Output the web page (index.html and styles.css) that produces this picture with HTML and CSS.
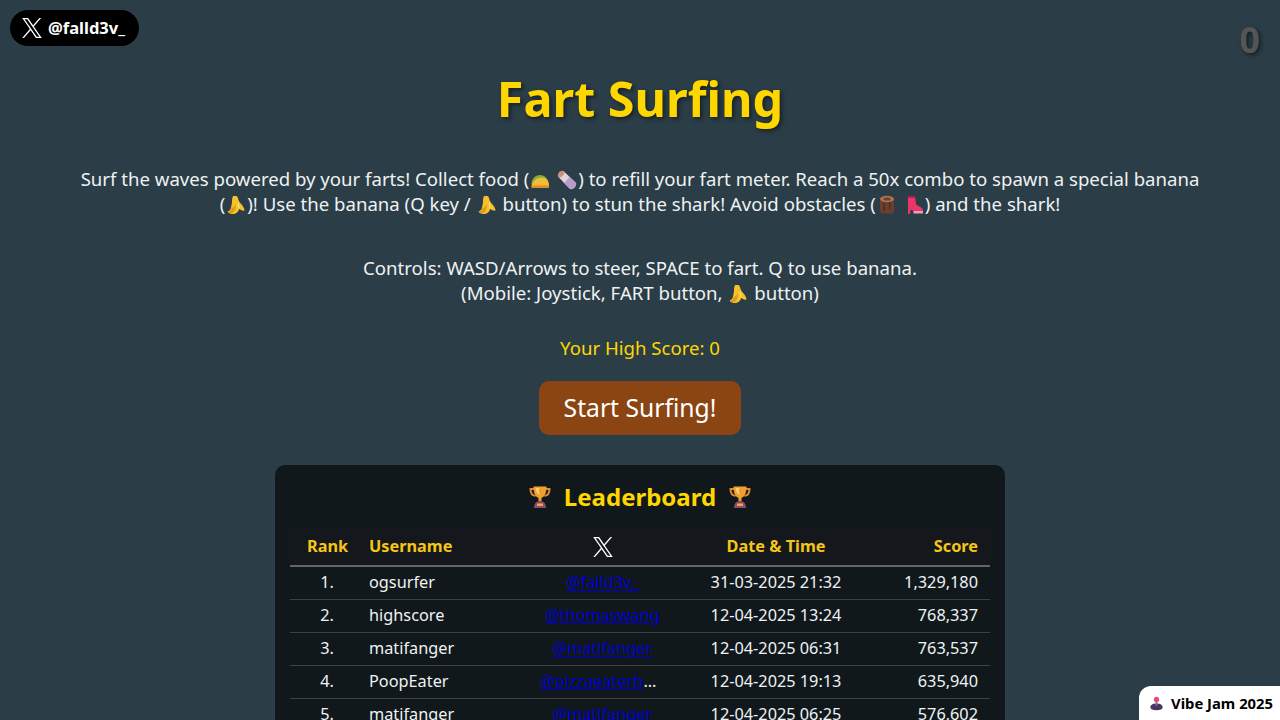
FILE: index.html
```html
<!DOCTYPE html>
<html lang="en">

<head>
  <meta charset="UTF-8">
  <title>Fart Surfing</title>
  <link rel="stylesheet" href="styles.css">
</head>

<body>
  <svg class="defs" width="0" height="0">
    <symbol id="x-logo" viewBox="0 0 1200 1227">
      <path fill="currentColor" d="M714.163 519.284L1160.89 0H1055.03L667.137 450.887L357.328 0H0L468.492 681.821L0 1226.37H105.866L515.491 750.218L842.672 1226.37H1200L714.137 519.284H714.163ZM569.165 687.828L521.697 619.934L144.011 79.6944H306.615L611.412 515.685L658.88 583.579L1055.08 1150.3H892.476L569.165 687.854V687.828Z"/>
    </symbol>
    <symbol id="taco" viewBox="0 0 20 20">
      <path fill="#7fae3a" d="M1.500 14c0-5 3.500-9 8.500-9s8.500 4 8.500 9z"/>
      <path fill="#f4bb34" d="M3 18c-1.500 0-2-1-1.500-2.500C3 10.500 7 7.500 11.500 7.500s7.500 3.500 7.500 7.500c0 1.500-1 3-2.500 3z"/>
      <path fill="#d9902a" d="M1.500 15.500h17.500V18H3z"/>
    </symbol>
    <symbol id="burrito" viewBox="0 0 20 20">
      <path fill="#e0d6dc" d="M6.500 1 19 13c1 3-3 7-6 6L1 6.500z"/>
      <path fill="#cf8f84" d="M1 6.500C0 3.500 3.500 0 6.500 1c1.500.5 1.500 2.500-.5 4.500S2.500 8 1 6.500z"/>
      <path fill="#b79ccc" d="m12.500 7 6.500 6c1 3-3 7-6 6L7 13z"/>
    </symbol>
    <symbol id="banana" viewBox="0 0 20 20">
      <path fill="#f7c12c" d="M10 1c1.500 0 2 2 2.500 4 .5 2 2 3 3.500 5 1.500 2 2.500 4 2.500 5.500-2 .5-4-.5-5.500-1.500 0 2-2 4.500-5 5-2.500.3-5-.5-6.500-2.500 2-.5 3-2 3.500-4 .5-2.500 1-4 1-6.500 0-2 .5-4 1-5z"/>
      <path fill="#e09a20" d="M9.500 9c1 4-1 8.500-4.500 9.500l-3-1.500c2-.5 3-2 3.500-4 1.500 0 3-1.500 4-4z"/>
      <path fill="#fbe08a" d="M12 7c1 2 2 5 1 7-1-1.500-1.500-4-1-7z"/>
    </symbol>
    <symbol id="log" viewBox="0 0 20 20">
      <path fill="#6b3f2e" d="M3 4h14v13c-1 2-3 1-4 2-1-1-4 0-5-1-1 1-4 0-5-1z"/>
      <ellipse fill="#a9744f" cx="10" cy="4" rx="7" ry="3.200"/>
      <ellipse fill="#6b3f2e" cx="10" cy="4" rx="3.500" ry="1.500"/>
      <path fill="#4f2c20" d="M6.500 8H8v8H6.500zm5.500-1h1.500v7H12z"/>
    </symbol>
    <symbol id="boot" viewBox="0 0 20 20">
      <path fill="#e8366a" d="M4 1h7l1 8c1 2 6 3 7 5.500V17H9.500c-.5-2-2-2.500-3-1.500L6 19H4z"/>
      <path fill="#f49ab4" d="M9.500 16H19v2.500H9.500z"/>
      <path fill="#b71f49" d="M4 1h7v2H4z"/>
    </symbol>
    <symbol id="trophy" viewBox="0 0 24 24">
      <path fill="none" stroke="#e08a2a" stroke-width="2" d="M6 4H2.500c0 4 2 6.500 5 7M18 4h3.500c0 4-2 6.500-5 7"/>
      <path fill="#f0a030" d="M5.500 1.500h13c0 6-1.500 10-5 11.500v3h-3v-3C7 11.500 5.500 7.500 5.500 1.500z"/>
      <path fill="#fbd070" d="M8 3h3c0 3 0 5 .5 7C9 9 8 6.500 8 3z"/>
      <path fill="#8a4c6a" d="M6 23c0-4 2-7 6-7s6 3 6 7z"/>
      <rect fill="#f2a24a" x="9" y="18.500" width="6" height="2.500"/>
    </symbol>
    <symbol id="joystick" viewBox="0 0 20 20">
      <path fill="#4a3560" d="M2 14c0-2 3-4 8-4s8 2 8 4v2c0 1.500-3 3-8 3s-8-1.500-8-3z"/>
      <rect fill="#8a6a9a" x="8.800" y="6" width="2.400" height="7"/>
      <circle fill="#e8487a" cx="10" cy="4.500" r="3.500"/>
    </symbol>
  </svg>

  <a class="x-badge" href="#">
    <svg class="x-badge-icon"><use href="#x-logo"/></svg>
    <span>@falld3v_</span>
  </a>

  <div class="score-display">0</div>

  <div class="menu">
    <h1 class="title">Fart Surfing</h1>

    <p class="intro">Surf the waves powered by your farts! Collect food (<svg class="emoji"><use href="#taco"/></svg> <svg class="emoji"><use href="#burrito"/></svg>) to refill your fart meter. Reach a 50x combo to spawn a special banana <span class="nowrap">(<svg class="emoji"><use href="#banana"/></svg>)!</span> Use the banana (Q key / <svg class="emoji"><use href="#banana"/></svg> button) to stun the shark! Avoid obstacles (<svg class="emoji"><use href="#log"/></svg> <svg class="emoji"><use href="#boot"/></svg>) and the shark!</p>

    <p class="controls">Controls: WASD/Arrows to steer, SPACE to fart. Q to use banana.<br>(Mobile: Joystick, FART button, <svg class="emoji"><use href="#banana"/></svg> button)</p>

    <p class="high-score">Your High Score: 0</p>

    <button class="start-button">Start Surfing!</button>

    <div class="leaderboard">
      <h2 class="leaderboard-title"><svg class="trophy"><use href="#trophy"/></svg> Leaderboard <svg class="trophy"><use href="#trophy"/></svg></h2>
      <table class="leaderboard-table">
        <thead>
          <tr>
            <th class="col-rank">Rank</th>
            <th class="col-user">Username</th>
            <th class="col-x"><svg class="th-x"><use href="#x-logo"/></svg></th>
            <th class="col-date">Date &amp; Time</th>
            <th class="col-score">Score</th>
          </tr>
        </thead>
        <tbody>
          <tr>
            <td class="col-rank">1.</td>
            <td class="col-user">ogsurfer</td>
            <td class="col-x"><a href="#">@falld3v_</a></td>
            <td class="col-date">31-03-2025 21:32</td>
            <td class="col-score">1,329,180</td>
          </tr>
          <tr>
            <td class="col-rank">2.</td>
            <td class="col-user">highscore</td>
            <td class="col-x"><a href="#">@thomaswang</a></td>
            <td class="col-date">12-04-2025 13:24</td>
            <td class="col-score">768,337</td>
          </tr>
          <tr>
            <td class="col-rank">3.</td>
            <td class="col-user">matifanger</td>
            <td class="col-x"><a href="#">@matifanger</a></td>
            <td class="col-date">12-04-2025 06:31</td>
            <td class="col-score">763,537</td>
          </tr>
          <tr>
            <td class="col-rank">4.</td>
            <td class="col-user">PoopEater</td>
            <td class="col-x"><a href="#">@pizzaeaterbot123</a></td>
            <td class="col-date">12-04-2025 19:13</td>
            <td class="col-score">635,940</td>
          </tr>
          <tr>
            <td class="col-rank">5.</td>
            <td class="col-user">matifanger</td>
            <td class="col-x"><a href="#">@matifanger</a></td>
            <td class="col-date">12-04-2025 06:25</td>
            <td class="col-score">576,602</td>
          </tr>
        </tbody>
      </table>
    </div>
  </div>

  <a class="vibe-jam" href="#"><svg class="vibe-icon"><use href="#joystick"/></svg>Vibe Jam 2025</a>
</body>

</html>
```

FILE: styles.css
```css
html, body {
  height: 100%;
  overflow: hidden;
}

body {
  margin: 0;
  background-color: #2b3d47;
  color: #eef2f3;
  font-family: "Noto Sans", "Open Sans", sans-serif;
}

.defs {
  position: absolute;
}

.nowrap {
  white-space: nowrap;
}

.emoji {
  display: inline-block;
  width: 20px;
  height: 20px;
  margin: 0 1px;
  vertical-align: -4px;
}

/* fixed corners */
.x-badge {
  position: fixed;
  top: 10px;
  left: 10px;
  display: flex;
  align-items: center;
  gap: 6px;
  height: 36px;
  width: 129px;
  box-sizing: border-box;
  padding: 0 0 2px 12px;
  background-color: #000;
  color: #fff;
  border-radius: 18px;
  font-size: 16.500px;
  font-weight: 700;
  text-decoration: none;
}

.x-badge-icon {
  width: 20px;
  height: 20px;
  margin-top: 2px;
}

.score-display {
  position: fixed;
  top: 16px;
  right: 20px;
  color: #555;
  font-size: 36px;
  font-weight: 700;
  line-height: 48px;
  text-shadow: 2px 2px 4px rgba(0, 0, 0, 0.5);
}

.vibe-jam {
  position: fixed;
  right: 0;
  bottom: 0;
  display: flex;
  align-items: center;
  gap: 7px;
  height: 34px;
  padding: 0 7px 0 10px;
  background-color: #fff;
  color: #000;
  border-top-left-radius: 12px;
  font-size: 14.800px;
  font-weight: 700;
  text-decoration: none;
}

.vibe-icon {
  width: 15px;
  height: 15px;
}

/* start menu */
.menu {
  display: flex;
  flex-direction: column;
  align-items: center;
  width: 1140px;
  margin: 0 auto;
  text-align: center;
}

.title {
  margin: 65px 0 0;
  color: #ffd700;
  font-size: 48.500px;
  font-weight: 700;
  line-height: 66px;
  text-shadow: 2px 2px 4px rgba(0, 0, 0, 0.5);
}

.intro,
.controls {
  margin: 0;
  font-size: 18.600px;
  line-height: 25px;
}

.intro {
  margin-top: 35px;
}

.controls {
  margin-top: 39px;
}

.high-score {
  margin: 30px 0 0;
  color: #ffd700;
  font-size: 18.600px;
  line-height: 25px;
}

.start-button {
  width: 202px;
  height: 54px;
  margin-top: 21px;
  padding: 0 0 2px;
  background-color: #8b4513;
  color: #fff;
  border: none;
  border-radius: 10px;
  font-family: inherit;
  font-size: 24.700px;
}

.leaderboard {
  width: 700px;
  margin-top: 30px;
  padding: 15px;
  background-color: rgba(0, 0, 0, 0.6);
  border-radius: 10px;
}

.leaderboard-title {
  display: flex;
  align-items: center;
  justify-content: center;
  gap: 12px;
  margin: 0 0 13px;
  color: #ffd700;
  font-size: 24px;
  font-weight: 700;
  line-height: 34px;
}

.trophy {
  width: 24px;
  height: 24px;
}

.leaderboard-table {
  width: 700px;
  table-layout: fixed;
  border-collapse: collapse;
  font-size: 16.300px;
}

.leaderboard-table th {
  height: 38px;
  padding: 0 12px;
  background-color: #14171b;
  color: #f5c518;
  border-bottom: 2px solid #666;
  font-weight: 700;
  font-size: 16.300px;
}

.leaderboard-table td {
  height: 30px;
  padding: 0 12px 2px;
  border-bottom: 1px solid #3a4248;
  line-height: 28px;
  white-space: nowrap;
  overflow: hidden;
  text-overflow: ellipsis;
}

.leaderboard-table a {
  color: #0000d0;
  text-decoration-thickness: 1px;
  text-underline-offset: 2px;
}

.col-rank { width: 40px; text-align: center; }
.leaderboard-table .col-rank { padding-left: 17px; padding-right: 10px; }
.col-user { width: 147px; text-align: left; }
.leaderboard-table .col-x { width: 125px; text-align: center; }
.col-date { width: 174px; text-align: center; }
.col-score { width: 91px; text-align: right; }

.th-x {
  width: 20px;
  height: 20px;
  color: #fff;
  vertical-align: middle;
}
```
